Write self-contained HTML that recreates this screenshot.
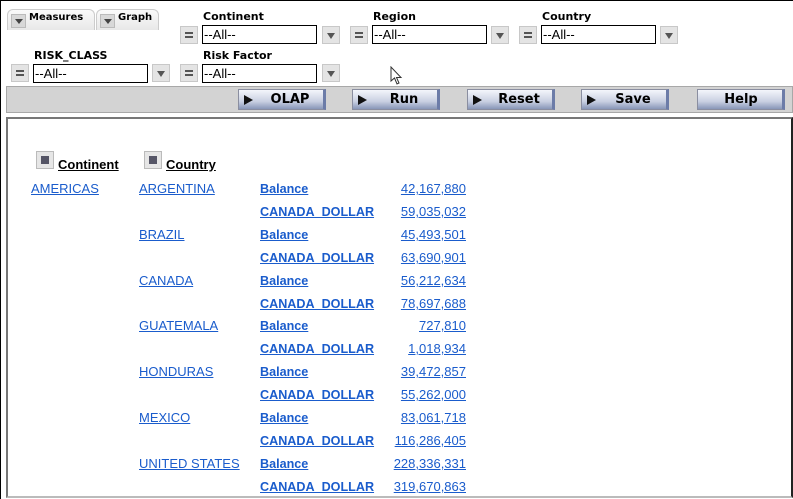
<!DOCTYPE html>
<html><head><style>
*{margin:0;padding:0;box-sizing:border-box}
body{width:793px;height:499px;background:#fff;position:relative;overflow:hidden;font-family:"DejaVu Sans",Verdana,sans-serif}
.a{position:absolute}
.lbl{position:absolute;font-size:11px;font-weight:bold;color:#000}
.sel{position:absolute;height:19px;width:115px;border:1px solid #000;background:#fff;font-family:"Liberation Sans",Arial,sans-serif;font-size:13px;line-height:17px;padding-left:1px}
.btn{position:absolute;width:18px;height:18px;background:#e4e4e4;border:1px solid #c8c8c8}
.eq::before,.eq::after{content:"";position:absolute;left:4px;width:8px;height:2px;background:#555}
.eq::before{top:5px}.eq::after{top:9px}
.dd::after{content:"";position:absolute;left:4px;top:6px;border-left:4px solid transparent;border-right:4px solid transparent;border-top:6px solid #555}
.tab{position:absolute;top:9px;height:21px;background:linear-gradient(#fafafa,#e8e8e8);border:1px solid #ccc;border-bottom:none;border-radius:6px 6px 0 0;font-size:10px;font-weight:bold;padding:2px 0 0 21px}
.tab .b{position:absolute;left:3px;top:4px;width:15px;height:14px;background:#d8d8d8;border:1px solid #bbb}
.tab .b::after{content:"";position:absolute;left:3px;top:4px;border-left:4px solid transparent;border-right:4px solid transparent;border-top:5px solid #444}
.pb{position:absolute;top:89px;width:88px;height:21px;background:linear-gradient(#f4f6fb,#c9d0e2 60%,#8896b8);border:1px solid #8a8ea0;border-right:3px solid #6c7ca8;font-size:13px;font-weight:bold;text-align:center;line-height:19px;padding-left:18px}
.pb i{position:absolute;left:5px;top:5px;border-top:5px solid transparent;border-bottom:5px solid transparent;border-left:9px solid #111}
.t{position:absolute;font-family:"Liberation Sans",Arial,sans-serif;font-size:13px;line-height:15px;color:#1a5ccc;text-decoration:underline}
.m{font-weight:bold;font-size:12.6px;margin-top:1px}
.n{text-align:right;width:100px}
</style></head><body>
<div class="a" style="left:0;top:0;width:1px;height:499px;background:#000"></div>
<div class="a" style="left:0;top:0;width:793px;height:1px;background:#000"></div>

<div class="tab" style="left:7px;width:88px"><span class="b"></span>Measures</div>
<div class="tab" style="left:96px;width:63px"><span class="b"></span>Graph</div>

<div class="lbl" style="left:203px;top:10px">Continent</div>
<div class="btn eq" style="left:180px;top:26px"></div>
<div class="sel" style="left:202px;top:25px">--All--</div>
<div class="btn dd" style="left:322px;top:26px"></div>

<div class="lbl" style="left:373px;top:10px">Region</div>
<div class="btn eq" style="left:350px;top:26px"></div>
<div class="sel" style="left:372px;top:25px">--All--</div>
<div class="btn dd" style="left:491px;top:26px"></div>

<div class="lbl" style="left:542px;top:10px">Country</div>
<div class="btn eq" style="left:519px;top:26px"></div>
<div class="sel" style="left:541px;top:25px">--All--</div>
<div class="btn dd" style="left:660px;top:26px"></div>

<div class="lbl" style="left:34px;top:49px">RISK_CLASS</div>
<div class="btn eq" style="left:11px;top:64px"></div>
<div class="sel" style="left:33px;top:64px">--All--</div>
<div class="btn dd" style="left:152px;top:64px"></div>

<div class="lbl" style="left:203px;top:49px">Risk Factor</div>
<div class="btn eq" style="left:180px;top:64px"></div>
<div class="sel" style="left:202px;top:64px">--All--</div>
<div class="btn dd" style="left:322px;top:64px"></div>

<svg class="a" style="left:390px;top:66px" width="14" height="20"><path d="M1 1 L1 15 L4.5 12 L7 18 L9 17 L6.5 11.5 L11 11.5 Z" fill="#fff" stroke="#333" stroke-width="1"/></svg>

<div class="a" style="left:6px;top:86px;width:787px;height:27px;background:#d3d3d3;border:1px solid #a8a8a8"></div>
<div class="pb" style="left:238px"><i></i>OLAP</div>
<div class="pb" style="left:352px"><i></i>Run</div>
<div class="pb" style="left:467px"><i></i>Reset</div>
<div class="pb" style="left:581px"><i></i>Save</div>
<div class="pb" style="left:697px;padding-left:2px">Help</div>

<div class="a" style="left:6px;top:117px;width:787px;height:381px;border-top:2px solid #777;border-left:2px solid #777;border-bottom:2px solid #bbb;border-right:2px solid #222"></div>

<div class="a" style="left:36px;top:151px;width:18px;height:18px;background:#e6e6e6;border:1px solid #bbb"><div class="a" style="left:4px;top:4px;width:8px;height:8px;background:#556"></div></div>
<div class="a" style="left:58px;top:157px;font-family:'Liberation Sans',Arial;font-size:13px;font-weight:bold;text-decoration:underline">Continent</div>
<div class="a" style="left:144px;top:151px;width:18px;height:18px;background:#e6e6e6;border:1px solid #bbb"><div class="a" style="left:4px;top:4px;width:8px;height:8px;background:#556"></div></div>
<div class="a" style="left:166px;top:157px;font-family:'Liberation Sans',Arial;font-size:13px;font-weight:bold;text-decoration:underline">Country</div>

<div class="t" style="left:31px;top:181px">AMERICAS</div>
<div class="t" style="left:139px;top:181px">ARGENTINA</div>
<div class="t" style="left:139px;top:227px">BRAZIL</div>
<div class="t" style="left:139px;top:273px">CANADA</div>
<div class="t" style="left:139px;top:318px">GUATEMALA</div>
<div class="t" style="left:139px;top:364px">HONDURAS</div>
<div class="t" style="left:139px;top:410px">MEXICO</div>
<div class="t" style="left:139px;top:456px">UNITED STATES</div>

<div class="t m" style="left:260px;top:181px">Balance</div><div class="t n" style="left:366px;top:181px">42,167,880</div>
<div class="t m" style="left:260px;top:204px">CANADA_DOLLAR</div><div class="t n" style="left:366px;top:204px">59,035,032</div>
<div class="t m" style="left:260px;top:227px">Balance</div><div class="t n" style="left:366px;top:227px">45,493,501</div>
<div class="t m" style="left:260px;top:250px">CANADA_DOLLAR</div><div class="t n" style="left:366px;top:250px">63,690,901</div>
<div class="t m" style="left:260px;top:273px">Balance</div><div class="t n" style="left:366px;top:273px">56,212,634</div>
<div class="t m" style="left:260px;top:296px">CANADA_DOLLAR</div><div class="t n" style="left:366px;top:296px">78,697,688</div>
<div class="t m" style="left:260px;top:318px">Balance</div><div class="t n" style="left:366px;top:318px">727,810</div>
<div class="t m" style="left:260px;top:341px">CANADA_DOLLAR</div><div class="t n" style="left:366px;top:341px">1,018,934</div>
<div class="t m" style="left:260px;top:364px">Balance</div><div class="t n" style="left:366px;top:364px">39,472,857</div>
<div class="t m" style="left:260px;top:387px">CANADA_DOLLAR</div><div class="t n" style="left:366px;top:387px">55,262,000</div>
<div class="t m" style="left:260px;top:410px">Balance</div><div class="t n" style="left:366px;top:410px">83,061,718</div>
<div class="t m" style="left:260px;top:433px">CANADA_DOLLAR</div><div class="t n" style="left:366px;top:433px">116,286,405</div>
<div class="t m" style="left:260px;top:456px">Balance</div><div class="t n" style="left:366px;top:456px">228,336,331</div>
<div class="t m" style="left:260px;top:479px">CANADA_DOLLAR</div><div class="t n" style="left:366px;top:479px">319,670,863</div>
</body></html>
